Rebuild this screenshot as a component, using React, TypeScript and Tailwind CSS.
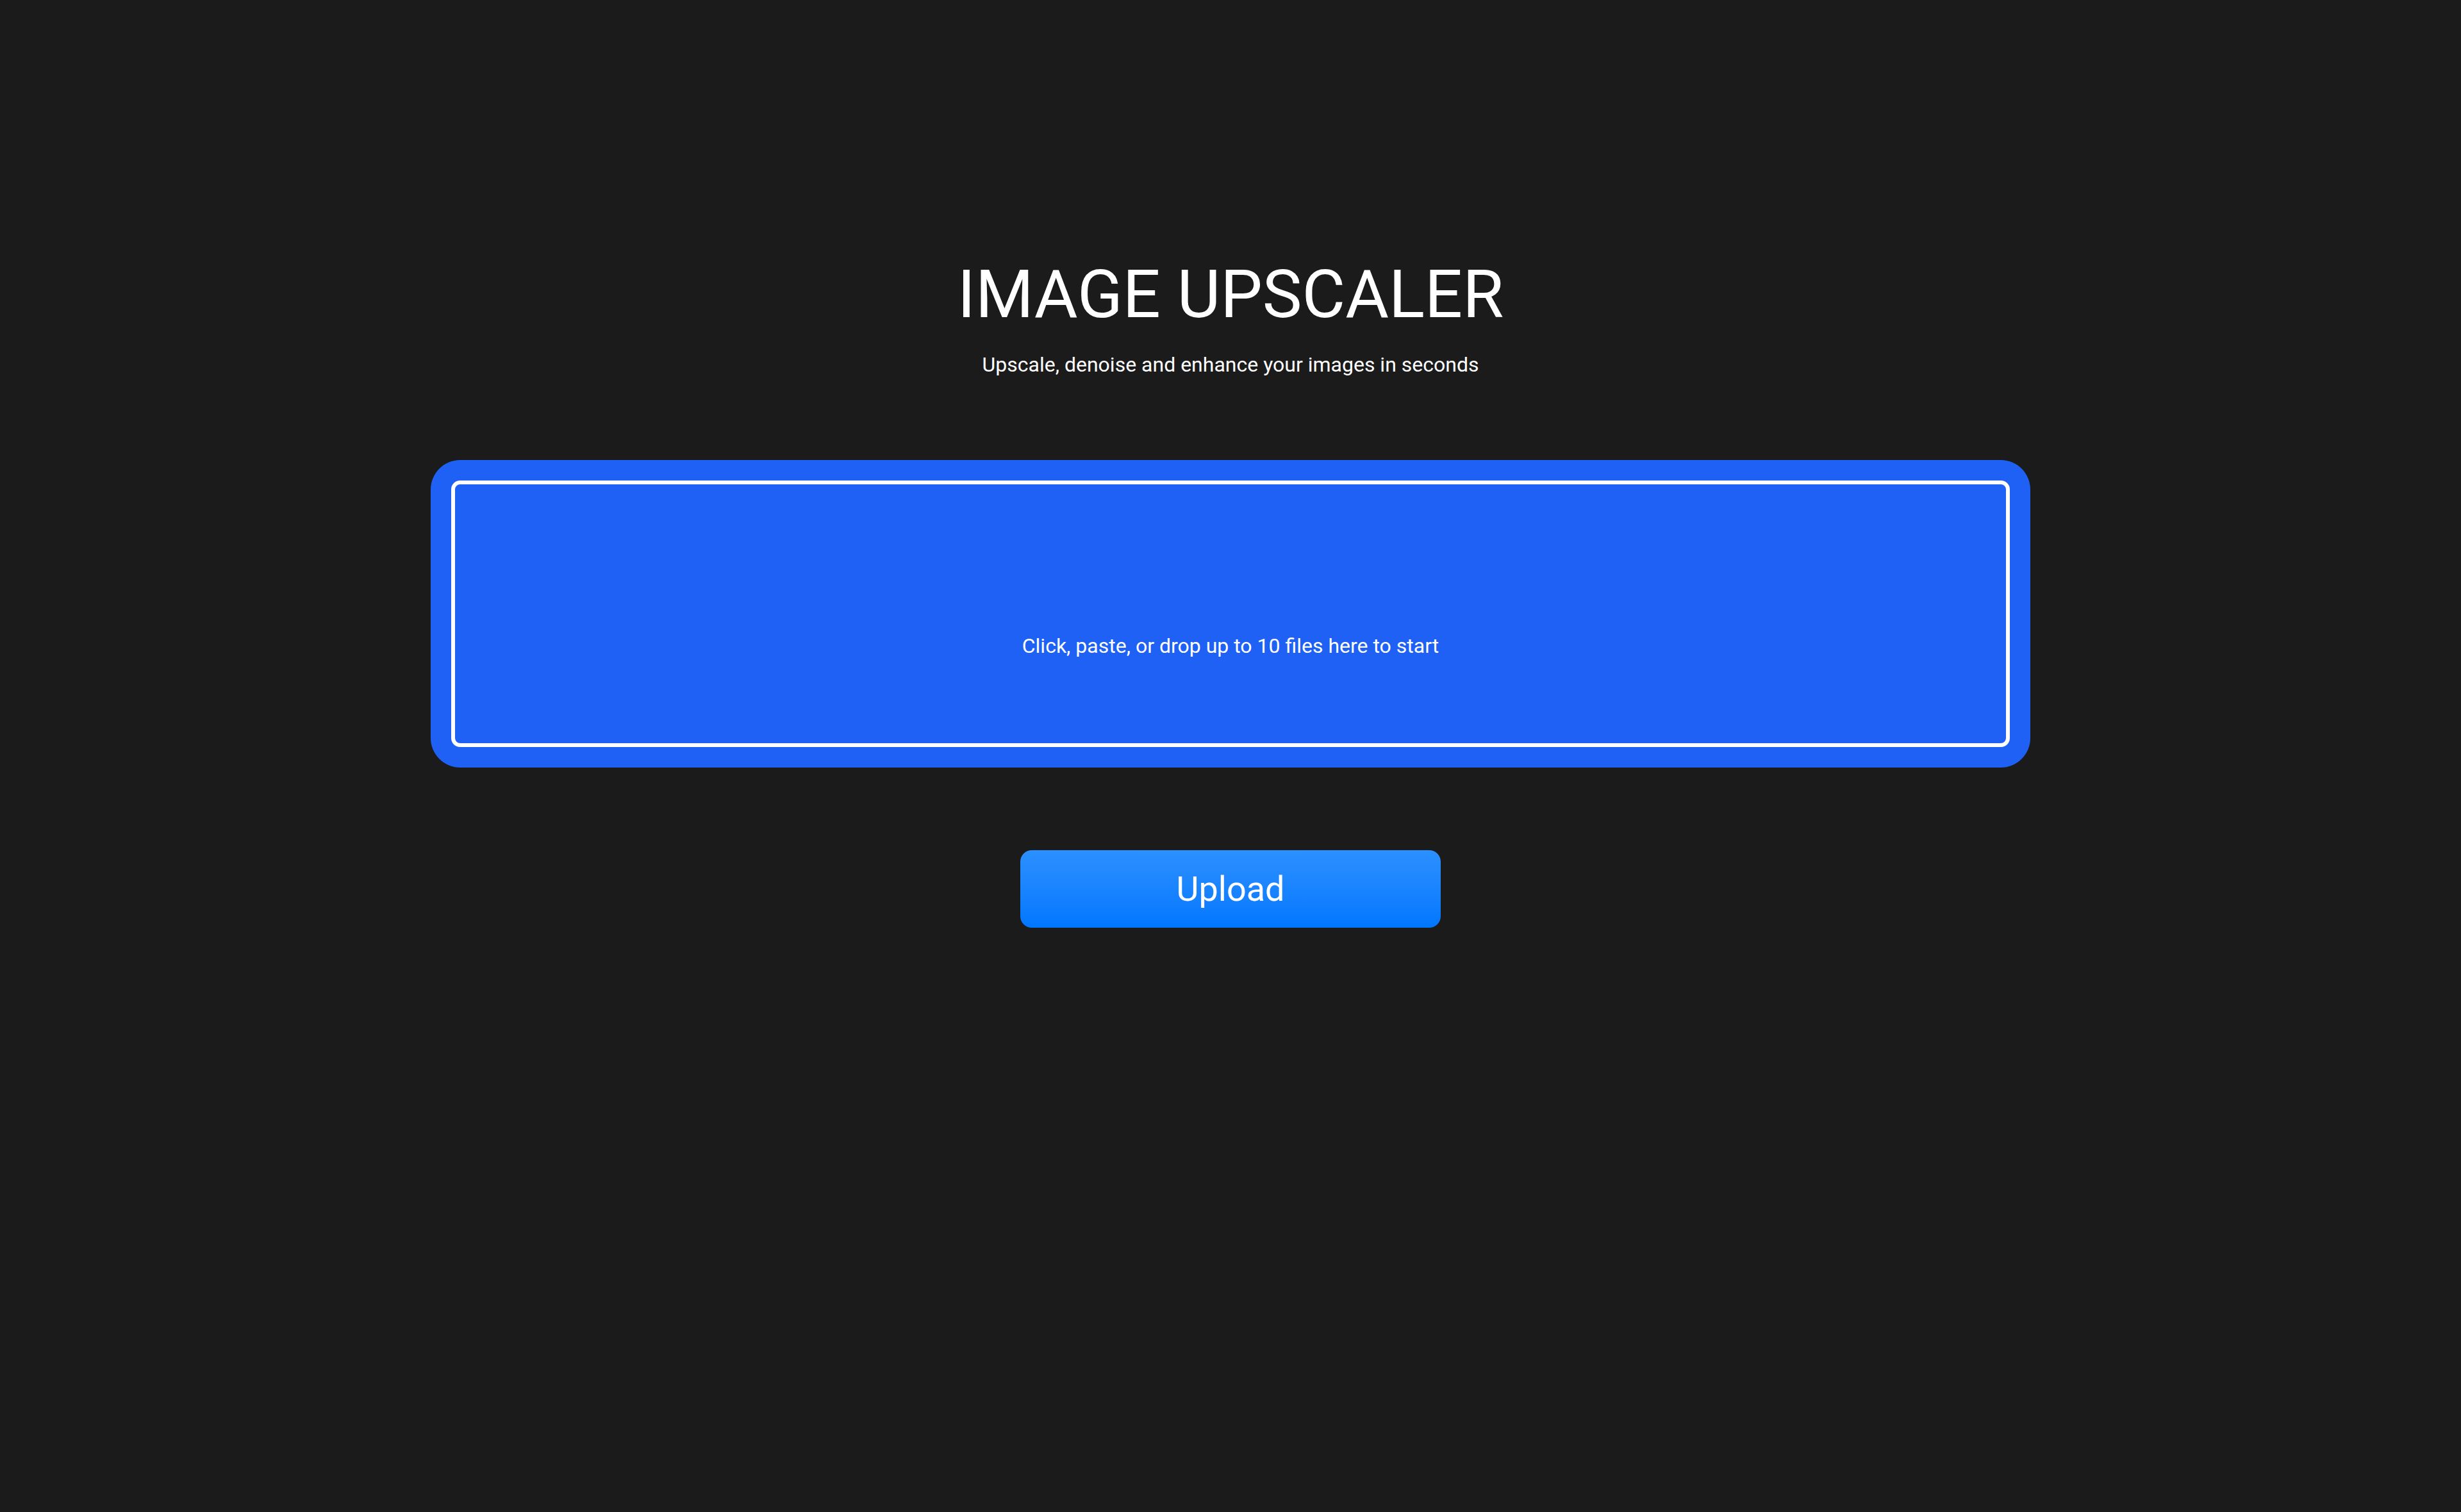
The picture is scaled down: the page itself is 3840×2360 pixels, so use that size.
import React from 'react';

export default function App() {
  return (
    <div
      className="min-h-screen w-full bg-[#1b1b1b] text-white flex flex-col items-center pt-[408px]"
      style={{ fontFamily: 'Roboto, "Noto Sans", sans-serif' }}
    >
      <h1 className="text-[104px] leading-none font-normal tracking-normal">IMAGE UPSCALER</h1>
      <p className="mt-[41px] text-[32px] leading-none">Upscale, denoise and enhance your images in seconds</p>

      {/* drop zone */}
      <div className="mt-[133px] w-[2496px] h-[480px] rounded-[46px] bg-[#1e61f4] p-8">
        <div className="h-full w-full rounded-[14px] border-[6px] border-white flex items-center justify-center pt-[100px] cursor-pointer">
          <span className="text-[32px] leading-none">Click, paste, or drop up to 10 files here to start</span>
        </div>
      </div>

      <button className="mt-[129px] w-[656px] h-[121px] rounded-[18px] bg-gradient-to-b from-[#2b90ff] to-[#0077ff] text-[54px] leading-none text-white">
        Upload
      </button>
    </div>
  );
}
